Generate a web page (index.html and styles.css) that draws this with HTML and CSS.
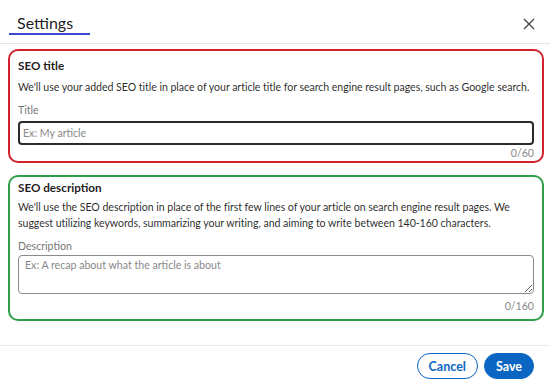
FILE: index.html
```html
<!DOCTYPE html>
<html lang="en">
<head>
  <meta charset="UTF-8" />
  <title>Settings</title>
  <link rel="stylesheet" href="styles.css">
</head>
<body>
  <div class="modal">
    <div class="modal-header">
      <h2 class="tab">Settings</h2>
      <button class="close" aria-label="Close">
        <svg width="12" height="12" viewBox="0 0 12 12"><path d="M1 1L11 11M11 1L1 11" stroke="#444" stroke-width="1.3" fill="none"/></svg>
      </button>
    </div>

    <div class="modal-body">
      <div class="field-box box-red">
        <h3>SEO title</h3>
        <p class="hint">We'll use your added SEO title in place of your article title for search engine result pages, such as Google search.</p>
        <label class="label">Title</label>
        <input class="input" type="text" placeholder="Ex: My article">
        <div class="count">0/60</div>
      </div>

      <div class="field-box box-green">
        <h3>SEO description</h3>
        <p class="hint">We'll use the SEO description in place of the first few lines of your article on search engine result pages. We suggest utilizing keywords, summarizing your writing, and aiming to write between 140-160 characters.</p>
        <label class="label">Description</label>
        <textarea class="textarea" placeholder="Ex: A recap about what the article is about"></textarea>
        <div class="count">0/160</div>
      </div>
    </div>

    <div class="modal-footer">
      <button class="btn btn-outline">Cancel</button>
      <button class="btn btn-primary">Save</button>
    </div>
  </div>
</body>
</html>
```

FILE: styles.css
```css
body {
  margin: 0;
  background: #fff;
  font-family: 'Lato', sans-serif;
  color: rgba(0, 0, 0, 0.9);
}

.modal {
  width: 550px;
  height: 386px;
}

.modal-header {
  display: flex;
  justify-content: space-between;
  align-items: flex-start;
  height: 43px;
  border-bottom: 1px solid #e6e6e6;
  padding: 0 14px 0 9px;
}

.tab {
  margin: 0;
  padding: 12px 0 0 8px;
  width: 73px;
  height: 21px;
  font-size: 16px;
  font-weight: 400;
  line-height: 21px;
  border-bottom: 2px solid #3a4bd1;
}

.close {
  margin-top: 18px;
  padding: 0;
  border: none;
  background: none;
  width: 14px;
  height: 14px;
}

.modal-body {
  padding: 5px 6px 0 8px;
}

.field-box {
  border: 2px solid #d0212c;
  border-radius: 10px;
  padding: 4px 8px 0 8px;
}

.box-red .hint {
  margin-top: 4px;
}

.box-green {
  border-color: #2f9e49;
  margin-top: 12px;
  padding-top: 0;
  padding-bottom: 5px;
}

.field-box h3 {
  margin: 0;
  font-size: 11.7px;
  font-weight: 700;
  line-height: 20px;
}

.hint {
  margin: 2px 0 0;
  font-size: 10.6px;
  letter-spacing: -0.05px;
  line-height: 16px;
  color: rgba(0, 0, 0, 0.85);
}

.label {
  display: block;
  margin-top: 7px;
  font-size: 10.6px;
  line-height: 16px;
  color: #777;
}

.input {
  display: block;
  box-sizing: border-box;
  width: 100%;
  height: 24px;
  margin-top: 3px;
  border: 2px solid #2b2b2b;
  border-radius: 4px;
  padding: 0 3px;
  font-family: inherit;
  font-size: 10.6px;
}

.textarea {
  display: block;
  box-sizing: border-box;
  width: 100%;
  height: 39px;
  margin-top: 1px;
  border: 1px solid #8c8c8c;
  border-radius: 4px;
  padding: 3px 6px;
  font-family: inherit;
  font-size: 10.6px;
  resize: vertical;
}

.input::placeholder,
.textarea::placeholder {
  color: #888;
}

.count {
  text-align: right;
  font-size: 10.6px;
  line-height: 16px;
  color: #888;
}

.box-green .count {
  margin-top: 4px;
}

.modal-footer {
  display: flex;
  justify-content: flex-end;
  gap: 6px;
  margin-top: 24px;
  border-top: 1px solid #ececec;
  padding: 7px 16px 0 0;
}

.btn {
  height: 26px;
  border-radius: 13px;
  padding: 0 11px;
  font-family: inherit;
  font-size: 12.5px;
  font-weight: 700;
}

.btn-outline {
  border: 1px solid #0a66c2;
  background: #fff;
  color: #0a66c2;
}

.btn-primary {
  border: 1px solid #0a66c2;
  background: #0a66c2;
  color: #fff;
}
```
